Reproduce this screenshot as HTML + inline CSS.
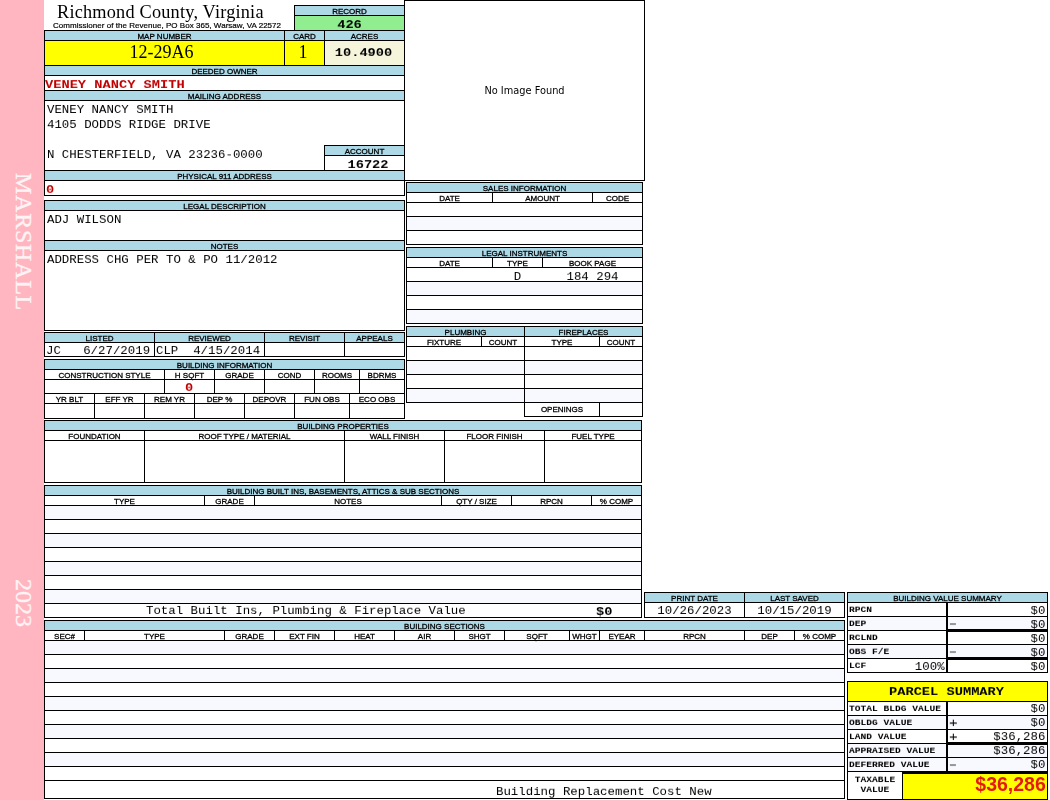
<!DOCTYPE html>
<html lang="en"><head><meta charset="utf-8"><title>Richmond County, Virginia - Property Record 426</title>
<style>
html,body{margin:0;padding:0;background:#fff}
body{width:1050px;height:800px;position:relative;overflow:hidden}
.r,.k,.t,.side{position:absolute}
.k{background:#000}
.t{line-height:24px;height:24px;white-space:nowrap;color:#000;will-change:transform}
.pre{white-space:pre}
.l{font-family:"Liberation Sans",sans-serif;letter-spacing:0;-webkit-text-stroke:.3px #000}
.c{font-family:"Liberation Sans",sans-serif;-webkit-text-stroke:.2px #000}
.s{font-family:"Liberation Serif",serif}
.m{font-family:"Liberation Mono",monospace}
.mb{font-family:"Liberation Mono",monospace;font-weight:bold}
.ms{font-family:"Liberation Mono",monospace;font-weight:bold}
.dj{font-family:"DejaVu Sans","Liberation Sans",sans-serif}
.red{color:#c00000}
.big{font-family:"Liberation Sans",sans-serif;font-weight:bold;color:#e41a10}
.side{font-family:"Liberation Serif",serif;font-size:24px;line-height:16px;height:16px;color:#fff;opacity:.85;-webkit-text-stroke:.35px #fff;white-space:nowrap;transform-origin:0 0;transform:translateX(16px) rotate(90deg)}
</style></head>
<body>
<div class="r" style="left:0px;top:0px;width:44px;height:800px;background:#ffb6c1"></div>
<div class="side" style="left:16px;top:172.5px;letter-spacing:.75px">MARSHALL</div>
<div class="side" style="left:16px;top:579px">2023</div>
<div class="t s" style="left:56.5px;top:0.0px;font-size:18.3px;letter-spacing:.2px;">Richmond County, Virginia</div>
<div class="t c" style="left:53px;top:13.5px;font-size:8px;letter-spacing:.03px;">Commissioner of the Revenue, PO Box 365, Warsaw, VA 22572</div>
<div class="r" style="left:295px;top:6px;width:109px;height:9px;background:#add8e6"></div>
<div class="r" style="left:295px;top:16px;width:109px;height:14px;background:#90ee90"></div>
<div class="k" style="left:294px;top:5px;width:111px;height:1px"></div>
<div class="k" style="left:294px;top:15px;width:111px;height:1px"></div>
<div class="k" style="left:294px;top:5px;width:1px;height:26px"></div>
<div class="t l" style="left:295px;width:109px;top:-0.5px;font-size:8px;text-align:center;">RECORD</div>
<div class="t mb" style="left:295px;width:109px;top:12.5px;font-size:13.7px;text-align:center;transform-origin:0 15.5px;transform:scaleY(0.88);">426</div>
<div class="r" style="left:45px;top:31px;width:359px;height:9px;background:#add8e6"></div>
<div class="r" style="left:45px;top:41px;width:239px;height:24px;background:#ffff00"></div>
<div class="r" style="left:285px;top:41px;width:39px;height:24px;background:#ffff00"></div>
<div class="r" style="left:325px;top:41px;width:79px;height:24px;background:#f5f5dc"></div>
<div class="k" style="left:44px;top:30px;width:361px;height:1px"></div>
<div class="k" style="left:44px;top:40px;width:361px;height:1px"></div>
<div class="k" style="left:44px;top:65px;width:361px;height:1px"></div>
<div class="k" style="left:284px;top:30px;width:1px;height:36px"></div>
<div class="k" style="left:324px;top:30px;width:1px;height:36px"></div>
<div class="t l" style="left:45px;width:239px;top:24.5px;font-size:8px;text-align:center;">MAP NUMBER</div>
<div class="t l" style="left:285px;width:39px;top:24.5px;font-size:8px;text-align:center;">CARD</div>
<div class="t l" style="left:325px;width:79px;top:24.5px;font-size:8px;text-align:center;">ACRES</div>
<div class="t s" style="left:45px;width:233px;top:40.0px;font-size:18px;text-align:center;">12-29A6</div>
<div class="t s" style="left:285px;width:36px;top:40.0px;font-size:18px;text-align:center;">1</div>
<div class="t mb" style="left:325px;width:77px;top:40.5px;font-size:13.7px;text-align:center;transform-origin:0 15.5px;transform:scaleY(0.88);">10.4900</div>
<div class="r" style="left:45px;top:66px;width:359px;height:9px;background:#add8e6"></div>
<div class="k" style="left:44px;top:75px;width:361px;height:1px"></div>
<div class="k" style="left:44px;top:90px;width:361px;height:1px"></div>
<div class="t l" style="left:45px;width:359px;top:59.5px;font-size:8px;text-align:center;">DEEDED OWNER</div>
<div class="t mb red" style="left:45px;top:72.5px;font-size:13.7px;transform-origin:0 15.5px;transform:scaleY(0.88);">VENEY NANCY SMITH</div>
<div class="r" style="left:45px;top:91px;width:359px;height:9px;background:#add8e6"></div>
<div class="k" style="left:44px;top:100px;width:361px;height:1px"></div>
<div class="t l" style="left:45px;width:359px;top:84.5px;font-size:8px;text-align:center;">MAILING ADDRESS</div>
<div class="t m" style="left:47px;top:98.0px;font-size:12.4px;transform-origin:0 15.0px;transform:scaleY(0.9);">VENEY NANCY SMITH</div>
<div class="t m" style="left:47px;top:113.0px;font-size:12.4px;transform-origin:0 15.0px;transform:scaleY(0.9);">4105 DODDS RIDGE DRIVE</div>
<div class="t m" style="left:47px;top:143.0px;font-size:12.4px;transform-origin:0 15.0px;transform:scaleY(0.9);">N CHESTERFIELD, VA 23236-0000</div>
<div class="r" style="left:325px;top:146px;width:79px;height:9px;background:#add8e6"></div>
<div class="k" style="left:324px;top:145px;width:81px;height:1px"></div>
<div class="k" style="left:324px;top:155px;width:81px;height:1px"></div>
<div class="k" style="left:324px;top:145px;width:1px;height:26px"></div>
<div class="t l" style="left:325px;width:79px;top:139.5px;font-size:8px;text-align:center;">ACCOUNT</div>
<div class="t mb" style="left:332px;width:72px;top:152.5px;font-size:13.7px;text-align:center;transform-origin:0 15.5px;transform:scaleY(0.88);">16722</div>
<div class="k" style="left:44px;top:170px;width:361px;height:1px"></div>
<div class="r" style="left:45px;top:171px;width:359px;height:9px;background:#add8e6"></div>
<div class="k" style="left:44px;top:180px;width:361px;height:1px"></div>
<div class="k" style="left:44px;top:195px;width:361px;height:1px"></div>
<div class="t l" style="left:45px;width:359px;top:164.5px;font-size:8px;text-align:center;">PHYSICAL 911 ADDRESS</div>
<div class="t mb red" style="left:46px;top:177.5px;font-size:13.7px;transform-origin:0 15.5px;transform:scaleY(0.88);">0</div>
<div class="k" style="left:44px;top:30px;width:1px;height:166px"></div>
<div class="k" style="left:44px;top:200px;width:361px;height:1px"></div>
<div class="r" style="left:45px;top:201px;width:359px;height:9px;background:#add8e6"></div>
<div class="k" style="left:44px;top:210px;width:361px;height:1px"></div>
<div class="k" style="left:44px;top:240px;width:361px;height:1px"></div>
<div class="r" style="left:45px;top:241px;width:359px;height:9px;background:#add8e6"></div>
<div class="k" style="left:44px;top:250px;width:361px;height:1px"></div>
<div class="k" style="left:44px;top:330px;width:361px;height:1px"></div>
<div class="k" style="left:44px;top:200px;width:1px;height:131px"></div>
<div class="k" style="left:404px;top:200px;width:1px;height:131px"></div>
<div class="t l" style="left:45px;width:359px;top:194.5px;font-size:8px;text-align:center;">LEGAL DESCRIPTION</div>
<div class="t l" style="left:45px;width:359px;top:234.5px;font-size:8px;text-align:center;">NOTES</div>
<div class="t m" style="left:47px;top:208.0px;font-size:12.4px;transform-origin:0 15.0px;transform:scaleY(0.9);">ADJ WILSON</div>
<div class="t m" style="left:47px;top:248.0px;font-size:12.4px;transform-origin:0 15.0px;transform:scaleY(0.9);">ADDRESS CHG PER TO &amp; PO 11/2012</div>
<div class="r" style="left:45px;top:333px;width:359px;height:9px;background:#add8e6"></div>
<div class="k" style="left:44px;top:332px;width:361px;height:1px"></div>
<div class="k" style="left:44px;top:342px;width:361px;height:1px"></div>
<div class="k" style="left:44px;top:356px;width:361px;height:1px"></div>
<div class="k" style="left:44px;top:332px;width:1px;height:25px"></div>
<div class="k" style="left:154px;top:332px;width:1px;height:25px"></div>
<div class="k" style="left:264px;top:332px;width:1px;height:25px"></div>
<div class="k" style="left:344px;top:332px;width:1px;height:25px"></div>
<div class="k" style="left:404px;top:332px;width:1px;height:25px"></div>
<div class="t l" style="left:45px;width:109px;top:326.5px;font-size:8px;text-align:center;">LISTED</div>
<div class="t l" style="left:155px;width:109px;top:326.5px;font-size:8px;text-align:center;">REVIEWED</div>
<div class="t l" style="left:265px;width:79px;top:326.5px;font-size:8px;text-align:center;">REVISIT</div>
<div class="t l" style="left:345px;width:59px;top:326.5px;font-size:8px;text-align:center;">APPEALS</div>
<div class="t m pre" style="left:46.3px;top:339.0px;font-size:12.4px;transform-origin:0 15.0px;transform:scaleY(0.9);">JC   6/27/2019</div>
<div class="t m pre" style="left:156.3px;top:339.0px;font-size:12.4px;transform-origin:0 15.0px;transform:scaleY(0.9);">CLP  4/15/2014</div>
<div class="r" style="left:45px;top:360px;width:359px;height:9px;background:#add8e6"></div>
<div class="k" style="left:44px;top:359px;width:361px;height:1px"></div>
<div class="k" style="left:44px;top:369px;width:361px;height:1px"></div>
<div class="k" style="left:44px;top:379px;width:361px;height:1px"></div>
<div class="k" style="left:44px;top:393px;width:361px;height:1px"></div>
<div class="k" style="left:44px;top:403px;width:361px;height:1px"></div>
<div class="k" style="left:44px;top:418px;width:361px;height:1px"></div>
<div class="k" style="left:44px;top:359px;width:1px;height:60px"></div>
<div class="k" style="left:404px;top:359px;width:1px;height:60px"></div>
<div class="k" style="left:164px;top:369px;width:1px;height:25px"></div>
<div class="k" style="left:214px;top:369px;width:1px;height:25px"></div>
<div class="k" style="left:264px;top:369px;width:1px;height:25px"></div>
<div class="k" style="left:314px;top:369px;width:1px;height:25px"></div>
<div class="k" style="left:359px;top:369px;width:1px;height:25px"></div>
<div class="k" style="left:94px;top:393px;width:1px;height:26px"></div>
<div class="k" style="left:144px;top:393px;width:1px;height:26px"></div>
<div class="k" style="left:194px;top:393px;width:1px;height:26px"></div>
<div class="k" style="left:244px;top:393px;width:1px;height:26px"></div>
<div class="k" style="left:294px;top:393px;width:1px;height:26px"></div>
<div class="k" style="left:349px;top:393px;width:1px;height:26px"></div>
<div class="t l" style="left:45px;width:359px;top:353.5px;font-size:8px;text-align:center;">BUILDING INFORMATION</div>
<div class="t l" style="left:45px;width:119px;top:363.5px;font-size:8px;text-align:center;">CONSTRUCTION STYLE</div>
<div class="t l" style="left:165px;width:49px;top:363.5px;font-size:8px;text-align:center;">H SQFT</div>
<div class="t l" style="left:215px;width:49px;top:363.5px;font-size:8px;text-align:center;">GRADE</div>
<div class="t l" style="left:265px;width:49px;top:363.5px;font-size:8px;text-align:center;">COND</div>
<div class="t l" style="left:315px;width:44px;top:363.5px;font-size:8px;text-align:center;">ROOMS</div>
<div class="t l" style="left:360px;width:44px;top:363.5px;font-size:8px;text-align:center;">BDRMS</div>
<div class="t l" style="left:45px;width:49px;top:387.5px;font-size:8px;text-align:center;">YR BLT</div>
<div class="t l" style="left:95px;width:49px;top:387.5px;font-size:8px;text-align:center;">EFF YR</div>
<div class="t l" style="left:145px;width:49px;top:387.5px;font-size:8px;text-align:center;">REM YR</div>
<div class="t l" style="left:195px;width:49px;top:387.5px;font-size:8px;text-align:center;">DEP %</div>
<div class="t l" style="left:245px;width:49px;top:387.5px;font-size:8px;text-align:center;">DEPOVR</div>
<div class="t l" style="left:295px;width:54px;top:387.5px;font-size:8px;text-align:center;">FUN OBS</div>
<div class="t l" style="left:350px;width:54px;top:387.5px;font-size:8px;text-align:center;">ECO OBS</div>
<div class="t mb red" style="left:165px;width:48px;top:375.5px;font-size:13.7px;text-align:center;transform-origin:0 15.5px;transform:scaleY(0.88);">0</div>
<div class="k" style="left:404px;top:0px;width:241px;height:1px"></div>
<div class="k" style="left:404px;top:180px;width:241px;height:1px"></div>
<div class="k" style="left:404px;top:0px;width:1px;height:196px"></div>
<div class="k" style="left:644px;top:0px;width:1px;height:181px"></div>
<div class="t dj" style="left:405px;width:239px;top:78.5px;font-size:9.8px;text-align:center;">No Image Found</div>
<div class="r" style="left:407px;top:183px;width:235px;height:9px;background:#add8e6"></div>
<div class="r" style="left:407px;top:217px;width:235px;height:13px;background:#f8f8ff"></div>
<div class="k" style="left:406px;top:182px;width:237px;height:1px"></div>
<div class="k" style="left:406px;top:192px;width:237px;height:1px"></div>
<div class="k" style="left:406px;top:202px;width:237px;height:1px"></div>
<div class="k" style="left:406px;top:216px;width:237px;height:1px"></div>
<div class="k" style="left:406px;top:230px;width:237px;height:1px"></div>
<div class="k" style="left:406px;top:244px;width:237px;height:1px"></div>
<div class="k" style="left:406px;top:182px;width:1px;height:63px"></div>
<div class="k" style="left:642px;top:182px;width:1px;height:63px"></div>
<div class="k" style="left:492px;top:192px;width:1px;height:11px"></div>
<div class="k" style="left:592px;top:192px;width:1px;height:11px"></div>
<div class="t l" style="left:407px;width:235px;top:176.5px;font-size:8px;text-align:center;">SALES INFORMATION</div>
<div class="t l" style="left:407px;width:85px;top:186.5px;font-size:8px;text-align:center;">DATE</div>
<div class="t l" style="left:493px;width:99px;top:186.5px;font-size:8px;text-align:center;">AMOUNT</div>
<div class="t l" style="left:593px;width:49px;top:186.5px;font-size:8px;text-align:center;">CODE</div>
<div class="r" style="left:407px;top:248px;width:235px;height:9px;background:#add8e6"></div>
<div class="r" style="left:407px;top:282px;width:235px;height:13px;background:#f8f8ff"></div>
<div class="r" style="left:407px;top:310px;width:235px;height:13px;background:#f8f8ff"></div>
<div class="k" style="left:406px;top:247px;width:237px;height:1px"></div>
<div class="k" style="left:406px;top:257px;width:237px;height:1px"></div>
<div class="k" style="left:406px;top:267px;width:237px;height:1px"></div>
<div class="k" style="left:406px;top:281px;width:237px;height:1px"></div>
<div class="k" style="left:406px;top:295px;width:237px;height:1px"></div>
<div class="k" style="left:406px;top:309px;width:237px;height:1px"></div>
<div class="k" style="left:406px;top:323px;width:237px;height:1px"></div>
<div class="k" style="left:406px;top:247px;width:1px;height:77px"></div>
<div class="k" style="left:642px;top:247px;width:1px;height:77px"></div>
<div class="k" style="left:492px;top:257px;width:1px;height:11px"></div>
<div class="k" style="left:542px;top:257px;width:1px;height:11px"></div>
<div class="t l" style="left:407px;width:235px;top:241.5px;font-size:8px;text-align:center;">LEGAL INSTRUMENTS</div>
<div class="t l" style="left:407px;width:85px;top:251.5px;font-size:8px;text-align:center;">DATE</div>
<div class="t l" style="left:493px;width:49px;top:251.5px;font-size:8px;text-align:center;">TYPE</div>
<div class="t l" style="left:543px;width:99px;top:251.5px;font-size:8px;text-align:center;">BOOK PAGE</div>
<div class="t m" style="left:493px;width:49px;top:265.0px;font-size:12.4px;text-align:center;transform-origin:0 15.0px;transform:scaleY(0.9);">D</div>
<div class="t m" style="left:543px;width:99px;top:265.0px;font-size:12.4px;text-align:center;transform-origin:0 15.0px;transform:scaleY(0.9);">184 294</div>
<div class="r" style="left:407px;top:327px;width:117px;height:9px;background:#add8e6"></div>
<div class="r" style="left:525px;top:327px;width:117px;height:9px;background:#add8e6"></div>
<div class="r" style="left:407px;top:361px;width:117px;height:13px;background:#f8f8ff"></div>
<div class="r" style="left:525px;top:361px;width:117px;height:13px;background:#f8f8ff"></div>
<div class="r" style="left:407px;top:389px;width:117px;height:13px;background:#f8f8ff"></div>
<div class="r" style="left:525px;top:389px;width:117px;height:13px;background:#f8f8ff"></div>
<div class="k" style="left:406px;top:326px;width:237px;height:1px"></div>
<div class="k" style="left:406px;top:336px;width:237px;height:1px"></div>
<div class="k" style="left:406px;top:346px;width:237px;height:1px"></div>
<div class="k" style="left:406px;top:360px;width:237px;height:1px"></div>
<div class="k" style="left:406px;top:374px;width:237px;height:1px"></div>
<div class="k" style="left:406px;top:388px;width:237px;height:1px"></div>
<div class="k" style="left:406px;top:402px;width:237px;height:1px"></div>
<div class="k" style="left:524px;top:416px;width:119px;height:1px"></div>
<div class="k" style="left:406px;top:326px;width:1px;height:77px"></div>
<div class="k" style="left:524px;top:326px;width:1px;height:91px"></div>
<div class="k" style="left:642px;top:326px;width:1px;height:91px"></div>
<div class="k" style="left:481px;top:336px;width:1px;height:11px"></div>
<div class="k" style="left:599px;top:336px;width:1px;height:11px"></div>
<div class="k" style="left:599px;top:402px;width:1px;height:15px"></div>
<div class="t l" style="left:407px;width:117px;top:320.5px;font-size:8px;text-align:center;">PLUMBING</div>
<div class="t l" style="left:525px;width:117px;top:320.5px;font-size:8px;text-align:center;">FIREPLACES</div>
<div class="t l" style="left:407px;width:74px;top:330.5px;font-size:8px;text-align:center;">FIXTURE</div>
<div class="t l" style="left:482px;width:42px;top:330.5px;font-size:8px;text-align:center;">COUNT</div>
<div class="t l" style="left:525px;width:74px;top:330.5px;font-size:8px;text-align:center;">TYPE</div>
<div class="t l" style="left:600px;width:42px;top:330.5px;font-size:8px;text-align:center;">COUNT</div>
<div class="t l" style="left:525px;width:74px;top:397.5px;font-size:8px;text-align:center;">OPENINGS</div>
<div class="r" style="left:45px;top:421px;width:596px;height:9px;background:#add8e6"></div>
<div class="k" style="left:44px;top:420px;width:598px;height:1px"></div>
<div class="k" style="left:44px;top:430px;width:598px;height:1px"></div>
<div class="k" style="left:44px;top:440px;width:598px;height:1px"></div>
<div class="k" style="left:44px;top:482px;width:598px;height:1px"></div>
<div class="k" style="left:44px;top:420px;width:1px;height:63px"></div>
<div class="k" style="left:641px;top:420px;width:1px;height:63px"></div>
<div class="k" style="left:144px;top:430px;width:1px;height:53px"></div>
<div class="k" style="left:344px;top:430px;width:1px;height:53px"></div>
<div class="k" style="left:444px;top:430px;width:1px;height:53px"></div>
<div class="k" style="left:544px;top:430px;width:1px;height:53px"></div>
<div class="t l" style="left:45px;width:596px;top:414.5px;font-size:8px;text-align:center;">BUILDING PROPERTIES</div>
<div class="t l" style="left:45px;width:99px;top:424.5px;font-size:8px;text-align:center;">FOUNDATION</div>
<div class="t l" style="left:145px;width:199px;top:424.5px;font-size:8px;text-align:center;">ROOF TYPE / MATERIAL</div>
<div class="t l" style="left:345px;width:99px;top:424.5px;font-size:8px;text-align:center;">WALL FINISH</div>
<div class="t l" style="left:445px;width:99px;top:424.5px;font-size:8px;text-align:center;">FLOOR FINISH</div>
<div class="t l" style="left:545px;width:96px;top:424.5px;font-size:8px;text-align:center;">FUEL TYPE</div>
<div class="r" style="left:45px;top:486px;width:596px;height:9px;background:#add8e6"></div>
<div class="k" style="left:44px;top:485px;width:598px;height:1px"></div>
<div class="k" style="left:44px;top:495px;width:598px;height:1px"></div>
<div class="k" style="left:44px;top:505px;width:598px;height:1px"></div>
<div class="k" style="left:44px;top:519px;width:598px;height:1px"></div>
<div class="k" style="left:44px;top:533px;width:598px;height:1px"></div>
<div class="k" style="left:44px;top:547px;width:598px;height:1px"></div>
<div class="k" style="left:44px;top:561px;width:598px;height:1px"></div>
<div class="k" style="left:44px;top:575px;width:598px;height:1px"></div>
<div class="k" style="left:44px;top:589px;width:598px;height:1px"></div>
<div class="k" style="left:44px;top:603px;width:598px;height:1px"></div>
<div class="k" style="left:44px;top:617px;width:598px;height:1px"></div>
<div class="r" style="left:45px;top:506px;width:596px;height:13px;background:#f8f8ff"></div>
<div class="r" style="left:45px;top:534px;width:596px;height:13px;background:#f8f8ff"></div>
<div class="r" style="left:45px;top:562px;width:596px;height:13px;background:#f8f8ff"></div>
<div class="r" style="left:45px;top:590px;width:596px;height:13px;background:#f8f8ff"></div>
<div class="k" style="left:44px;top:485px;width:1px;height:133px"></div>
<div class="k" style="left:641px;top:485px;width:1px;height:133px"></div>
<div class="k" style="left:204px;top:495px;width:1px;height:11px"></div>
<div class="k" style="left:254px;top:495px;width:1px;height:11px"></div>
<div class="k" style="left:441px;top:495px;width:1px;height:11px"></div>
<div class="k" style="left:511px;top:495px;width:1px;height:11px"></div>
<div class="k" style="left:591px;top:495px;width:1px;height:11px"></div>
<div class="t l" style="left:45px;width:596px;top:479.5px;font-size:8px;text-align:center;">BUILDING BUILT INS, BASEMENTS, ATTICS &amp; SUB SECTIONS</div>
<div class="t l" style="left:45px;width:159px;top:489.5px;font-size:8px;text-align:center;">TYPE</div>
<div class="t l" style="left:205px;width:49px;top:489.5px;font-size:8px;text-align:center;">GRADE</div>
<div class="t l" style="left:255px;width:186px;top:489.5px;font-size:8px;text-align:center;">NOTES</div>
<div class="t l" style="left:442px;width:69px;top:489.5px;font-size:8px;text-align:center;">QTY / SIZE</div>
<div class="t l" style="left:512px;width:79px;top:489.5px;font-size:8px;text-align:center;">RPCN</div>
<div class="t l" style="left:592px;width:49px;top:489.5px;font-size:8px;text-align:center;">% COMP</div>
<div class="t m" style="left:145.7px;top:599.0px;font-size:12.4px;transform-origin:0 15.0px;transform:scaleY(0.9);">Total Built Ins, Plumbing &amp; Fireplace Value</div>
<div class="t mb" style="left:595.5px;top:599.5px;font-size:13.7px;transform-origin:0 15.5px;transform:scaleY(0.88);">$0</div>
<div class="r" style="left:645px;top:593px;width:199px;height:9px;background:#add8e6"></div>
<div class="k" style="left:644px;top:592px;width:201px;height:1px"></div>
<div class="k" style="left:644px;top:602px;width:201px;height:1px"></div>
<div class="k" style="left:644px;top:617px;width:201px;height:1px"></div>
<div class="k" style="left:644px;top:592px;width:1px;height:26px"></div>
<div class="k" style="left:744px;top:592px;width:1px;height:26px"></div>
<div class="k" style="left:844px;top:592px;width:1px;height:26px"></div>
<div class="t l" style="left:645px;width:99px;top:586.5px;font-size:8px;text-align:center;">PRINT DATE</div>
<div class="t l" style="left:745px;width:99px;top:586.5px;font-size:8px;text-align:center;">LAST SAVED</div>
<div class="t m" style="left:645px;width:99px;top:599.0px;font-size:12.4px;text-align:center;transform-origin:0 15.0px;transform:scaleY(0.9);">10/26/2023</div>
<div class="t m" style="left:745px;width:99px;top:599.0px;font-size:12.4px;text-align:center;transform-origin:0 15.0px;transform:scaleY(0.9);">10/15/2019</div>
<div class="r" style="left:45px;top:621px;width:799px;height:9px;background:#add8e6"></div>
<div class="k" style="left:44px;top:620px;width:801px;height:1px"></div>
<div class="k" style="left:44px;top:630px;width:801px;height:1px"></div>
<div class="k" style="left:44px;top:640px;width:801px;height:1px"></div>
<div class="k" style="left:44px;top:654px;width:801px;height:1px"></div>
<div class="k" style="left:44px;top:668px;width:801px;height:1px"></div>
<div class="k" style="left:44px;top:682px;width:801px;height:1px"></div>
<div class="k" style="left:44px;top:696px;width:801px;height:1px"></div>
<div class="k" style="left:44px;top:710px;width:801px;height:1px"></div>
<div class="k" style="left:44px;top:724px;width:801px;height:1px"></div>
<div class="k" style="left:44px;top:738px;width:801px;height:1px"></div>
<div class="k" style="left:44px;top:752px;width:801px;height:1px"></div>
<div class="k" style="left:44px;top:766px;width:801px;height:1px"></div>
<div class="k" style="left:44px;top:780px;width:801px;height:1px"></div>
<div class="k" style="left:44px;top:798px;width:801px;height:1px"></div>
<div class="r" style="left:45px;top:641px;width:799px;height:13px;background:#f8f8ff"></div>
<div class="r" style="left:45px;top:669px;width:799px;height:13px;background:#f8f8ff"></div>
<div class="r" style="left:45px;top:697px;width:799px;height:13px;background:#f8f8ff"></div>
<div class="r" style="left:45px;top:725px;width:799px;height:13px;background:#f8f8ff"></div>
<div class="r" style="left:45px;top:753px;width:799px;height:13px;background:#f8f8ff"></div>
<div class="k" style="left:44px;top:620px;width:1px;height:179px"></div>
<div class="k" style="left:844px;top:620px;width:1px;height:179px"></div>
<div class="k" style="left:84px;top:630px;width:1px;height:11px"></div>
<div class="k" style="left:224px;top:630px;width:1px;height:11px"></div>
<div class="k" style="left:274px;top:630px;width:1px;height:11px"></div>
<div class="k" style="left:334px;top:630px;width:1px;height:11px"></div>
<div class="k" style="left:394px;top:630px;width:1px;height:11px"></div>
<div class="k" style="left:454px;top:630px;width:1px;height:11px"></div>
<div class="k" style="left:504px;top:630px;width:1px;height:11px"></div>
<div class="k" style="left:569px;top:630px;width:1px;height:11px"></div>
<div class="k" style="left:599px;top:630px;width:1px;height:11px"></div>
<div class="k" style="left:644px;top:630px;width:1px;height:11px"></div>
<div class="k" style="left:744px;top:630px;width:1px;height:11px"></div>
<div class="k" style="left:794px;top:630px;width:1px;height:11px"></div>
<div class="t l" style="left:45px;width:799px;top:614.5px;font-size:8px;text-align:center;">BUILDING SECTIONS</div>
<div class="t l" style="left:45px;width:39px;top:624.5px;font-size:8px;text-align:center;">SEC#</div>
<div class="t l" style="left:85px;width:139px;top:624.5px;font-size:8px;text-align:center;">TYPE</div>
<div class="t l" style="left:225px;width:49px;top:624.5px;font-size:8px;text-align:center;">GRADE</div>
<div class="t l" style="left:275px;width:59px;top:624.5px;font-size:8px;text-align:center;">EXT FIN</div>
<div class="t l" style="left:335px;width:59px;top:624.5px;font-size:8px;text-align:center;">HEAT</div>
<div class="t l" style="left:395px;width:59px;top:624.5px;font-size:8px;text-align:center;">AIR</div>
<div class="t l" style="left:455px;width:49px;top:624.5px;font-size:8px;text-align:center;">SHGT</div>
<div class="t l" style="left:505px;width:64px;top:624.5px;font-size:8px;text-align:center;">SQFT</div>
<div class="t l" style="left:570px;width:29px;top:624.5px;font-size:8px;text-align:center;">WHGT</div>
<div class="t l" style="left:600px;width:44px;top:624.5px;font-size:8px;text-align:center;">EYEAR</div>
<div class="t l" style="left:645px;width:99px;top:624.5px;font-size:8px;text-align:center;">RPCN</div>
<div class="t l" style="left:745px;width:49px;top:624.5px;font-size:8px;text-align:center;">DEP</div>
<div class="t l" style="left:795px;width:49px;top:624.5px;font-size:8px;text-align:center;">% COMP</div>
<div class="t m" style="left:495.5px;top:780.0px;font-size:12.4px;transform-origin:0 15.0px;transform:scaleY(0.9);">Building Replacement Cost New</div>
<div class="r" style="left:848px;top:593px;width:199px;height:9px;background:#add8e6"></div>
<div class="r" style="left:848px;top:617px;width:199px;height:13px;background:#f8f8ff"></div>
<div class="r" style="left:848px;top:645px;width:199px;height:13px;background:#f8f8ff"></div>
<div class="k" style="left:847px;top:592px;width:201px;height:1px"></div>
<div class="k" style="left:847px;top:602px;width:201px;height:1px"></div>
<div class="k" style="left:847px;top:616px;width:201px;height:1px"></div>
<div class="k" style="left:847px;top:630px;width:201px;height:1px"></div>
<div class="k" style="left:847px;top:644px;width:201px;height:1px"></div>
<div class="k" style="left:847px;top:658px;width:201px;height:1px"></div>
<div class="k" style="left:847px;top:672px;width:201px;height:1px"></div>
<div class="k" style="left:847px;top:592px;width:1px;height:81px"></div>
<div class="k" style="left:1047px;top:592px;width:1px;height:81px"></div>
<div class="k" style="left:946px;top:602px;width:2px;height:71px"></div>
<div class="k" style="left:948px;top:629px;width:100px;height:3px"></div>
<div class="k" style="left:948px;top:657px;width:100px;height:3px"></div>
<div class="t l" style="left:848px;width:199px;top:586.5px;font-size:8px;text-align:center;">BUILDING VALUE SUMMARY</div>
<div class="t ms" style="left:849.3px;top:597.5px;font-size:9.6px;transform-origin:0 14.5px;transform:scaleY(0.9);">RPCN</div>
<div class="t m" style="left:948px;width:97.40000000000009px;top:599.0px;font-size:12.4px;text-align:right;transform-origin:0 15.0px;transform:scaleY(0.9);">$0</div>
<div class="t ms" style="left:849.3px;top:611.5px;font-size:9.6px;transform-origin:0 14.5px;transform:scaleY(0.9);">DEP</div>
<div class="t m" style="left:948px;width:97.40000000000009px;top:613.0px;font-size:12.4px;text-align:right;transform-origin:0 15.0px;transform:scaleY(0.9);">$0</div>
<div class="t ms" style="left:849.3px;top:625.5px;font-size:9.6px;transform-origin:0 14.5px;transform:scaleY(0.9);">RCLND</div>
<div class="t m" style="left:948px;width:97.40000000000009px;top:627.0px;font-size:12.4px;text-align:right;transform-origin:0 15.0px;transform:scaleY(0.9);">$0</div>
<div class="t ms" style="left:849.3px;top:639.5px;font-size:9.6px;transform-origin:0 14.5px;transform:scaleY(0.9);">OBS F/E</div>
<div class="t m" style="left:948px;width:97.40000000000009px;top:641.0px;font-size:12.4px;text-align:right;transform-origin:0 15.0px;transform:scaleY(0.9);">$0</div>
<div class="t ms" style="left:849.3px;top:653.5px;font-size:9.6px;transform-origin:0 14.5px;transform:scaleY(0.9);">LCF</div>
<div class="t m" style="left:948px;width:97.40000000000009px;top:655.0px;font-size:12.4px;text-align:right;transform-origin:0 15.0px;transform:scaleY(0.9);">$0</div>
<div class="t m" style="left:900px;width:44.60000000000002px;top:655.0px;font-size:12.4px;text-align:right;transform-origin:0 15.0px;transform:scaleY(0.9);">100%</div>
<div class="t m" style="left:949px;top:613.0px;font-size:12.4px;transform-origin:0 15.0px;transform:scaleY(0.9);">&#8722;</div>
<div class="t m" style="left:949px;top:641.0px;font-size:12.4px;transform-origin:0 15.0px;transform:scaleY(0.9);">&#8722;</div>
<div class="r" style="left:848px;top:682px;width:199px;height:19px;background:#ffff00"></div>
<div class="r" style="left:848px;top:716px;width:199px;height:13px;background:#f8f8ff"></div>
<div class="r" style="left:848px;top:744px;width:199px;height:13px;background:#f8f8ff"></div>
<div class="r" style="left:848px;top:758px;width:199px;height:13px;background:#f8f8ff"></div>
<div class="k" style="left:847px;top:681px;width:201px;height:1px"></div>
<div class="k" style="left:847px;top:701px;width:201px;height:1px"></div>
<div class="k" style="left:847px;top:715px;width:201px;height:1px"></div>
<div class="k" style="left:847px;top:729px;width:201px;height:1px"></div>
<div class="k" style="left:847px;top:743px;width:201px;height:1px"></div>
<div class="k" style="left:847px;top:757px;width:201px;height:1px"></div>
<div class="k" style="left:847px;top:771px;width:201px;height:1px"></div>
<div class="k" style="left:847px;top:799px;width:201px;height:1px"></div>
<div class="k" style="left:847px;top:681px;width:1px;height:119px"></div>
<div class="k" style="left:1047px;top:681px;width:1px;height:119px"></div>
<div class="k" style="left:946px;top:701px;width:2px;height:71px"></div>
<div class="k" style="left:948px;top:742px;width:100px;height:3px"></div>
<div class="r" style="left:903px;top:774px;width:144px;height:25px;background:#ffff00"></div>
<div class="k" style="left:903px;top:771px;width:145px;height:3px"></div>
<div class="k" style="left:902px;top:771px;width:1px;height:29px"></div>
<div class="t mb" style="left:848px;width:197px;top:679.5px;font-size:13.7px;text-align:center;transform-origin:0 15.5px;transform:scaleY(0.88);">PARCEL SUMMARY</div>
<div class="t ms" style="left:849.3px;top:696.5px;font-size:9.6px;transform-origin:0 14.5px;transform:scaleY(0.9);">TOTAL BLDG VALUE</div>
<div class="t m" style="left:948px;width:97.40000000000009px;top:697.0px;font-size:12.4px;text-align:right;transform-origin:0 15.0px;transform:scaleY(0.9);">$0</div>
<div class="t ms" style="left:849.3px;top:710.5px;font-size:9.6px;transform-origin:0 14.5px;transform:scaleY(0.9);">OBLDG VALUE</div>
<div class="t m" style="left:948px;width:97.40000000000009px;top:711.0px;font-size:12.4px;text-align:right;transform-origin:0 15.0px;transform:scaleY(0.9);">$0</div>
<div class="t m" style="left:948.6px;top:711.0px;font-size:14.5px;transform-origin:0 16.0px;transform:scaleY(0.9);">+</div>
<div class="t ms" style="left:849.3px;top:724.5px;font-size:9.6px;transform-origin:0 14.5px;transform:scaleY(0.9);">LAND VALUE</div>
<div class="t m" style="left:948px;width:97.40000000000009px;top:725.0px;font-size:12.4px;text-align:right;transform-origin:0 15.0px;transform:scaleY(0.9);">$36,286</div>
<div class="t m" style="left:948.6px;top:725.0px;font-size:14.5px;transform-origin:0 16.0px;transform:scaleY(0.9);">+</div>
<div class="t ms" style="left:849.3px;top:738.5px;font-size:9.6px;transform-origin:0 14.5px;transform:scaleY(0.9);">APPRAISED VALUE</div>
<div class="t m" style="left:948px;width:97.40000000000009px;top:739.0px;font-size:12.4px;text-align:right;transform-origin:0 15.0px;transform:scaleY(0.9);">$36,286</div>
<div class="t ms" style="left:849.3px;top:752.5px;font-size:9.6px;transform-origin:0 14.5px;transform:scaleY(0.9);">DEFERRED VALUE</div>
<div class="t m" style="left:948px;width:97.40000000000009px;top:753.0px;font-size:12.4px;text-align:right;transform-origin:0 15.0px;transform:scaleY(0.9);">$0</div>
<div class="t m" style="left:949px;top:754.0px;font-size:12.4px;transform-origin:0 15.0px;transform:scaleY(0.9);">&#8722;</div>
<div class="t ms" style="left:848px;width:54px;top:767.5px;font-size:9.6px;text-align:center;transform-origin:0 14.5px;transform:scaleY(0.9);">TAXABLE</div>
<div class="t ms" style="left:848px;width:54px;top:777.5px;font-size:9.6px;text-align:center;transform-origin:0 14.5px;transform:scaleY(0.9);">VALUE</div>
<div class="t big" style="left:903px;width:142.79999999999995px;top:772.0px;font-size:19.5px;text-align:right;">$36,286</div>
</body></html>
